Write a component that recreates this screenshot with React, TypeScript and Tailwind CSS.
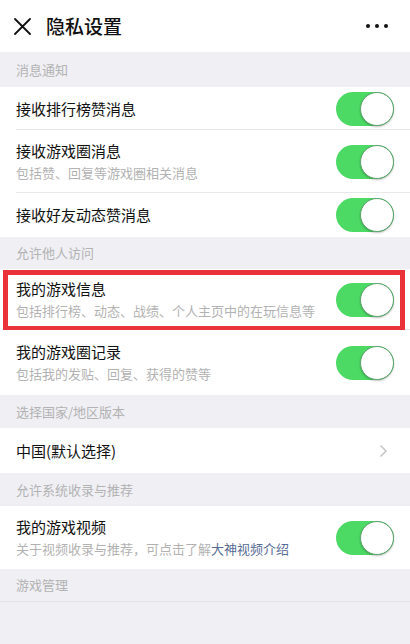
import React from "react";

const Toggle = () => (
  <div className="relative w-[58px] h-[34px] rounded-full bg-[#4cd964] shrink-0">
    <div className="absolute right-0 top-0 w-[34px] h-[34px] rounded-full bg-white border-[1.5px] border-[#5fa36f] shadow-[0_1px_2px_rgba(0,0,0,0.25)]" />
  </div>
);

const Section = ({ label, h }: { label: string; h: string }) => (
  <div className={`${h} bg-[#efeff4] flex items-center px-4 text-[13px] text-[#b3b3b3]`}>{label}</div>
);

const Row = ({
  title,
  sub,
  h,
  divider = true,
  right,
}: {
  title: string;
  sub?: React.ReactNode;
  h: string;
  divider?: boolean;
  right?: React.ReactNode;
}) => (
  <div className={`${h} relative bg-white flex items-center pl-4 pr-4`}>
    <div className="flex-1 flex flex-col">
      <div className="text-[15px] leading-[22px] text-[#111]">{title}</div>
      {sub && <div className="text-[13px] leading-[20px] text-[#b2b2b2] mt-[1px]">{sub}</div>}
    </div>
    {right ?? <Toggle />}
    {divider && <div className="absolute left-4 right-0 bottom-0 h-px bg-[#e8e8e8]" />}
  </div>
);

export default function App() {
  return (
    <div
      className="w-[410px] h-[644px] overflow-hidden bg-[#efeff4] flex flex-col"
      style={{ fontFamily: '"Noto Sans CJK SC", "Noto Sans", sans-serif' }}
    >
      <div className="h-[52px] bg-white flex items-center pl-[14px] pr-[22px] shrink-0">
        <svg width="17" height="17" viewBox="0 0 17 17" className="shrink-0">
          <path d="M1 1 L16 16 M16 1 L1 16" stroke="#111" strokeWidth="1.8" strokeLinecap="round" />
        </svg>
        <div className="ml-[15px] text-[19px] font-medium text-[#111] flex-1">隐私设置</div>
        <div className="flex gap-[5px]">
          <div className="w-[4px] h-[4px] rounded-full bg-[#111]" />
          <div className="w-[4px] h-[4px] rounded-full bg-[#111]" />
          <div className="w-[4px] h-[4px] rounded-full bg-[#111]" />
        </div>
      </div>
      <Section label="消息通知" h="h-[35px]" />
      <Row title="接收排行榜赞消息" h="h-[43px]" />
      <Row title="接收游戏圈消息" sub="包括赞、回复等游戏圈相关消息" h="h-[63px]" />
      <Row title="接收好友动态赞消息" h="h-[44px]" divider={false} />
      <Section label="允许他人访问" h="h-[32px]" />
      <div className="relative">
        <Row title="我的游戏信息" sub="包括排行榜、动态、战绩、个人主页中的在玩信息等" h="h-[61px]" />
        <div className="absolute left-[3px] right-[5px] top-[1px] bottom-[-1px] border-[5px] border-[#ea3339]" />
      </div>
      <Row title="我的游戏圈记录" sub="包括我的发贴、回复、获得的赞等" h="h-[65px]" divider={false} />
      <Section label="选择国家/地区版本" h="h-[33px]" />
      <Row
        title="中国(默认选择)"
        h="h-[45px]"
        divider={false}
        right={
          <svg width="9" height="14" viewBox="0 0 9 14" className="mr-[6px]">
            <path d="M1.5 1.5 L7 7 L1.5 12.5" fill="none" stroke="#c7c7cc" strokeWidth="1.6" />
          </svg>
        }
      />
      <Section label="允许系统收录与推荐" h="h-[33px]" />
      <Row
        title="我的游戏视频"
        sub={
          <>
            关于视频收录与推荐，可点击了解<span className="text-[#576b95]">大神视频介绍</span>
          </>
        }
        h="h-[63px]"
        divider={false}
      />
      <Section label="游戏管理" h="h-[32px]" />
      <div className="flex-1 border-t border-[#e3e3e8] bg-[#efeff4]" />
    </div>
  );
}
